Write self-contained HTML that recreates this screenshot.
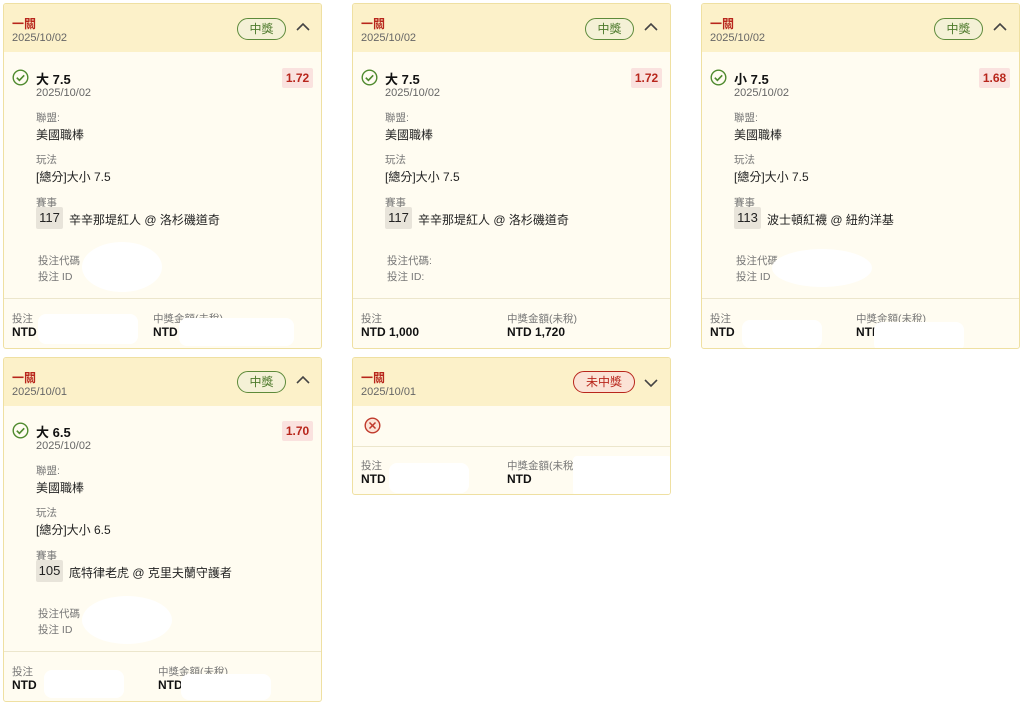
<!DOCTYPE html>
<html><head><meta charset="utf-8"><style>
*{margin:0;padding:0;box-sizing:border-box}
body{width:1025px;height:707px;background:#fff;position:relative;font-family:"Liberation Sans","Noto Sans CJK TC",sans-serif;color:#222;overflow:hidden}
.c{position:absolute;border:1px solid #efe0a2;background:#fffcf1;border-radius:3px;overflow:hidden}
.h{position:absolute;left:0;top:0;right:0;height:48px;background:#fcf1c9}
.a{position:absolute;white-space:nowrap}
.t{font-size:12px;font-weight:bold;color:#b8261c}
.d{font-size:11px;color:#666}
.l{font-size:10.5px;color:#777}
.v{font-size:12px;color:#222}
.b{font-size:12px;font-weight:bold;color:#111}
.badge{position:absolute;height:22px;border-radius:11px;font-size:12px;line-height:20px;text-align:center}
.win{border:1px solid #5d8a3a;color:#4d7a2c;background:#f4f1d6}
.lose{border:1px solid #b8261c;color:#b8261c;background:#fbe3d6}
.odd{position:absolute;width:31px;height:20px;background:#fae2df;color:#b8261c;font-weight:bold;font-size:12px;line-height:20px;text-align:center;border-radius:2px}
.num{position:absolute;width:27px;height:22px;background:#e8e4da;font-size:13px;line-height:22px;text-align:center;border-radius:2px}
.sep{position:absolute;left:0;right:0;height:1px;background:#ece6cc}
.w{position:absolute;background:#fff;border-radius:50%}
</style></head><body>

<!-- card1 -->
<div class="c" style="left:3px;top:3px;width:319px;height:346px">
<div class="h"></div>
<div class="a t" style="left:8px;top:11px">一關</div>
<div class="a d" style="left:8px;top:28px">2025/10/02</div>
<div class="badge win" style="left:233px;top:14px;width:49px">中獎</div>
<svg class="a" style="left:291px;top:17px" width="16" height="12"><path d="M2 9L8 3L14 9" fill="none" stroke="#444" stroke-width="1.6"/></svg>
<svg class="a" style="left:8px;top:65px" width="17" height="17"><circle cx="8.5" cy="8.5" r="7.3" fill="none" stroke="#4f8a2e" stroke-width="1.4"/><path d="M4.8 8.7l2.6 2.6 4.8-5" fill="none" stroke="#4f8a2e" stroke-width="1.6"/></svg>
<div class="a b" style="left:32px;top:65px;font-size:13px">大 7.5</div>
<div class="odd" style="left:278px;top:64px">1.72</div>
<div class="a d" style="left:32px;top:83px">2025/10/02</div>
<div class="a l" style="left:32px;top:106px">聯盟:</div>
<div class="a v" style="left:32px;top:122px">美國職棒</div>
<div class="a l" style="left:32px;top:148px">玩法</div>
<div class="a v" style="left:32px;top:164px">[總分]大小 7.5</div>
<div class="a l" style="left:32px;top:191px">賽事</div>
<div class="num" style="left:32px;top:203px">117</div>
<div class="a v" style="left:65px;top:207px">辛辛那堤紅人 @ 洛杉磯道奇</div>
<div class="a l" style="left:34px;top:249px">投注代碼</div>
<div class="a l" style="left:34px;top:265px">投注 ID</div>
<div class="w" style="left:78px;top:238px;width:80px;height:50px"></div>
<div class="sep" style="top:294px"></div>
<div class="a l" style="left:8px;top:307px">投注</div>
<div class="a b" style="left:8px;top:321px">NTD</div>
<div class="a l" style="left:149px;top:307px">中獎金額(未稅)</div>
<div class="a b" style="left:149px;top:321px">NTD</div>
<div class="w" style="left:34px;top:310px;width:100px;height:30px;border-radius:8px"></div>
<div class="w" style="left:175px;top:314px;width:115px;height:28px;border-radius:8px"></div>
</div>

<!-- card2 -->
<div class="c" style="left:352px;top:3px;width:319px;height:346px">
<div class="h"></div>
<div class="a t" style="left:8px;top:11px">一關</div>
<div class="a d" style="left:8px;top:28px">2025/10/02</div>
<div class="badge win" style="left:232px;top:14px;width:49px">中獎</div>
<svg class="a" style="left:290px;top:17px" width="16" height="12"><path d="M2 9L8 3L14 9" fill="none" stroke="#444" stroke-width="1.6"/></svg>
<svg class="a" style="left:8px;top:65px" width="17" height="17"><circle cx="8.5" cy="8.5" r="7.3" fill="none" stroke="#4f8a2e" stroke-width="1.4"/><path d="M4.8 8.7l2.6 2.6 4.8-5" fill="none" stroke="#4f8a2e" stroke-width="1.6"/></svg>
<div class="a b" style="left:32px;top:65px;font-size:13px">大 7.5</div>
<div class="odd" style="left:278px;top:64px">1.72</div>
<div class="a d" style="left:32px;top:83px">2025/10/02</div>
<div class="a l" style="left:32px;top:106px">聯盟:</div>
<div class="a v" style="left:32px;top:122px">美國職棒</div>
<div class="a l" style="left:32px;top:148px">玩法</div>
<div class="a v" style="left:32px;top:164px">[總分]大小 7.5</div>
<div class="a l" style="left:32px;top:191px">賽事</div>
<div class="num" style="left:32px;top:203px">117</div>
<div class="a v" style="left:65px;top:207px">辛辛那堤紅人 @ 洛杉磯道奇</div>
<div class="a l" style="left:34px;top:249px">投注代碼:</div>
<div class="a l" style="left:34px;top:265px">投注 ID:</div>
<div class="sep" style="top:294px"></div>
<div class="a l" style="left:8px;top:307px">投注</div>
<div class="a b" style="left:8px;top:321px">NTD 1,000</div>
<div class="a l" style="left:154px;top:307px">中獎金額(未稅)</div>
<div class="a b" style="left:154px;top:321px">NTD 1,720</div>
</div>

<!-- card3 -->
<div class="c" style="left:701px;top:3px;width:319px;height:346px">
<div class="h"></div>
<div class="a t" style="left:8px;top:11px">一關</div>
<div class="a d" style="left:8px;top:28px">2025/10/02</div>
<div class="badge win" style="left:232px;top:14px;width:49px">中獎</div>
<svg class="a" style="left:290px;top:17px" width="16" height="12"><path d="M2 9L8 3L14 9" fill="none" stroke="#444" stroke-width="1.6"/></svg>
<svg class="a" style="left:8px;top:65px" width="17" height="17"><circle cx="8.5" cy="8.5" r="7.3" fill="none" stroke="#4f8a2e" stroke-width="1.4"/><path d="M4.8 8.7l2.6 2.6 4.8-5" fill="none" stroke="#4f8a2e" stroke-width="1.6"/></svg>
<div class="a b" style="left:32px;top:65px;font-size:13px">小 7.5</div>
<div class="odd" style="left:277px;top:64px">1.68</div>
<div class="a d" style="left:32px;top:83px">2025/10/02</div>
<div class="a l" style="left:32px;top:106px">聯盟:</div>
<div class="a v" style="left:32px;top:122px">美國職棒</div>
<div class="a l" style="left:32px;top:148px">玩法</div>
<div class="a v" style="left:32px;top:164px">[總分]大小 7.5</div>
<div class="a l" style="left:32px;top:191px">賽事</div>
<div class="num" style="left:32px;top:203px">113</div>
<div class="a v" style="left:65px;top:207px">波士頓紅襪 @ 紐約洋基</div>
<div class="a l" style="left:34px;top:249px">投注代碼:</div>
<div class="a l" style="left:34px;top:265px">投注 ID</div>
<div class="w" style="left:70px;top:245px;width:100px;height:38px"></div>
<div class="sep" style="top:294px"></div>
<div class="a l" style="left:8px;top:307px">投注</div>
<div class="a b" style="left:8px;top:321px">NTD</div>
<div class="a l" style="left:154px;top:307px">中獎金額(未稅)</div>
<div class="a b" style="left:154px;top:321px">NTD</div>
<div class="w" style="left:40px;top:316px;width:80px;height:28px;border-radius:8px"></div>
<div class="w" style="left:172px;top:318px;width:90px;height:30px;border-radius:8px"></div>
</div>

<!-- card4 -->
<div class="c" style="left:3px;top:357px;width:319px;height:345px">
<div class="h"></div>
<div class="a t" style="left:8px;top:11px">一關</div>
<div class="a d" style="left:8px;top:28px">2025/10/01</div>
<div class="badge win" style="left:233px;top:13px;width:49px">中獎</div>
<svg class="a" style="left:291px;top:16px" width="16" height="12"><path d="M2 9L8 3L14 9" fill="none" stroke="#444" stroke-width="1.6"/></svg>
<svg class="a" style="left:8px;top:64px" width="17" height="17"><circle cx="8.5" cy="8.5" r="7.3" fill="none" stroke="#4f8a2e" stroke-width="1.4"/><path d="M4.8 8.7l2.6 2.6 4.8-5" fill="none" stroke="#4f8a2e" stroke-width="1.6"/></svg>
<div class="a b" style="left:32px;top:64px;font-size:13px">大 6.5</div>
<div class="odd" style="left:278px;top:63px">1.70</div>
<div class="a d" style="left:32px;top:82px">2025/10/02</div>
<div class="a l" style="left:32px;top:105px">聯盟:</div>
<div class="a v" style="left:32px;top:121px">美國職棒</div>
<div class="a l" style="left:32px;top:147px">玩法</div>
<div class="a v" style="left:32px;top:163px">[總分]大小 6.5</div>
<div class="a l" style="left:32px;top:190px">賽事</div>
<div class="num" style="left:32px;top:202px">105</div>
<div class="a v" style="left:65px;top:206px">底特律老虎 @ 克里夫蘭守護者</div>
<div class="a l" style="left:34px;top:248px">投注代碼</div>
<div class="a l" style="left:34px;top:264px">投注 ID</div>
<div class="w" style="left:78px;top:238px;width:90px;height:48px"></div>
<div class="sep" style="top:293px"></div>
<div class="a l" style="left:8px;top:306px">投注</div>
<div class="a b" style="left:8px;top:320px">NTD</div>
<div class="a l" style="left:154px;top:306px">中獎金額(未稅)</div>
<div class="a b" style="left:154px;top:320px">NTD</div>
<div class="w" style="left:40px;top:312px;width:80px;height:28px;border-radius:8px"></div>
<div class="w" style="left:177px;top:316px;width:90px;height:26px;border-radius:8px"></div>
</div>

<!-- card5 -->
<div class="c" style="left:352px;top:357px;width:319px;height:138px">
<div class="h"></div>
<div class="a t" style="left:8px;top:11px">一關</div>
<div class="a d" style="left:8px;top:28px">2025/10/01</div>
<div class="badge lose" style="left:220px;top:13px;width:62px">未中獎</div>
<svg class="a" style="left:290px;top:19px" width="16" height="12"><path d="M2 3L8 9L14 3" fill="none" stroke="#444" stroke-width="1.6"/></svg>
<svg class="a" style="left:11px;top:59px" width="17" height="17"><circle cx="8.5" cy="8.5" r="7.3" fill="#fbe3d6" stroke="#c0392b" stroke-width="1.4"/><path d="M5.5 5.5l6 6M11.5 5.5l-6 6" stroke="#c0392b" stroke-width="1.5"/></svg>
<div class="sep" style="top:88px"></div>
<div class="a l" style="left:8px;top:100px">投注</div>
<div class="a b" style="left:8px;top:114px">NTD</div>
<div class="a l" style="left:154px;top:100px">中獎金額(未稅)</div>
<div class="a b" style="left:154px;top:114px">NTD</div>
<div class="w" style="left:36px;top:105px;width:80px;height:30px;border-radius:8px"></div>
<div class="w" style="left:220px;top:98px;width:99px;height:40px;border-radius:4px"></div>
</div>
</body></html>
